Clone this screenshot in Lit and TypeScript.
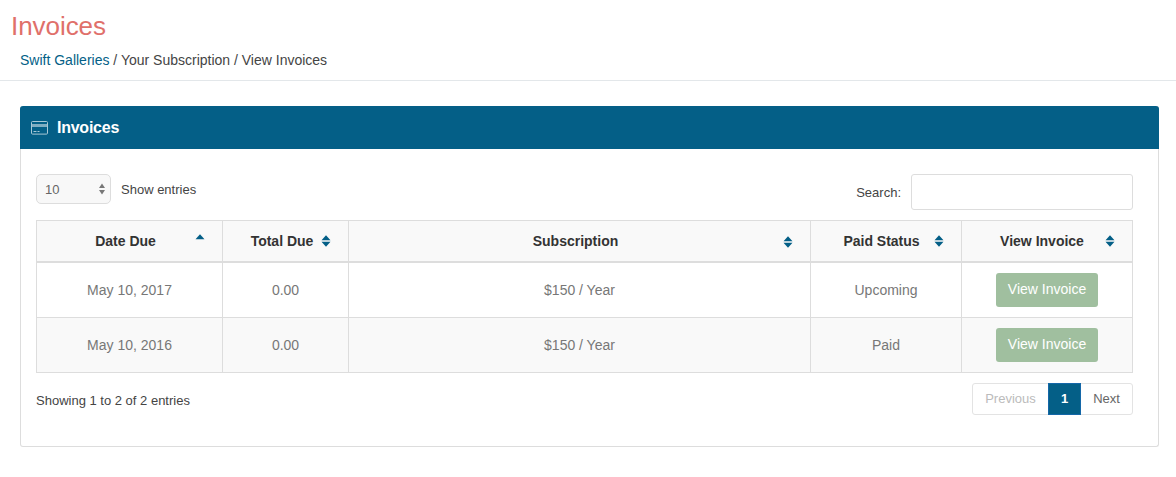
import { LitElement, html, css } from "lit";
import { customElement } from "lit/decorators.js";

const sortBoth = html`<svg class="sort" width="10" height="12" viewBox="0 0 10 12"><path d="M5 0.2 9.5 5.2H.5zM5 11.8.5 6.8h9z" fill="#045f87"/></svg>`;
const sortUp = html`<svg class="sort up" width="10" height="12" viewBox="0 0 10 12"><path d="M5 0.2 9.5 5.2H.5z" fill="#045f87"/></svg>`;

const rows = [
  ["May 10, 2017", "0.00", "$150 / Year", "Upcoming"],
  ["May 10, 2016", "0.00", "$150 / Year", "Paid"],
];

@customElement("app-root")
export class AppRoot extends LitElement {
  static styles = css`
    :host { display: block; font-family: "Liberation Sans", Arial, sans-serif; color: #333; background: #fff; min-height: 477px; box-sizing: border-box; }
    * { box-sizing: border-box; }
    .head { height: 81px; border-bottom: 1px solid #e3e7ea; padding: 11px 0 0 11px; }
    h1 { margin: 0; font-size: 26px; line-height: 30px; font-weight: 400; color: #e0706a; letter-spacing: -0.05px; }
    .crumb { margin: 10px 0 0 9px; font-size: 14px; line-height: 18px; color: #444; }
    .crumb a { color: #045f87; text-decoration: none; }
    .panel { margin: 25px 17px 0 20px; height: 341px; border: 1px solid #dddddd; border-top: 0; border-radius: 3px; display: flex; flex-direction: column; }
    .panel-head { margin: 0 -1px; height: 43px; background: #045f87; border-radius: 3px 3px 0 0; display: flex; align-items: center; padding-left: 11px; gap: 8px; color: #fff; font-size: 16px; font-weight: 700; letter-spacing: -0.25px; }
    .panel-head svg { display: block; }
    .body { padding: 25px 25px 0 15px; }
    .tools { height: 36px; display: flex; justify-content: space-between; align-items: flex-start; font-size: 13px; color: #444; }
    .len { display: flex; align-items: center; gap: 10px; height: 30px; }
    .select { width: 75px; height: 30px; border: 1px solid #ddd; border-radius: 5px; background: #f8f8f8; color: #666; font-size: 13px; display: flex; align-items: center; justify-content: space-between; padding: 0 3px 0 8px; }
    .search { display: flex; align-items: center; gap: 10px; }
    .input { width: 222px; height: 36px; border: 1px solid #ddd; border-radius: 3px; background: #fff; }
    .wrap { margin-top: 10px; }
    table { width: 1096px; table-layout: fixed; border-collapse: collapse; font-size: 14px; }
    .c1 { width: 186px; } .c2 { width: 126px; } .c3 { width: 462px; } .c4 { width: 151px; } .c5 { width: 171px; }
    th, td { border: 1px solid #dddddd; text-align: center; padding: 0; }
    th { height: 41.5px; background: #f9f9f9; border-bottom-width: 2px; color: #333; font-weight: 700; position: relative; }
    .th { display: flex; align-items: center; justify-content: center; height: 100%; }
    .t1 { padding-right: 8px; } .t2 { padding-left: 11px; gap: 8px; }
    .t3 { padding-right: 8px; } .t4 { padding-left: 15px; gap: 14px; } .t5 { padding-left: 21px; gap: 21px; }
    .sort { display: block; flex: none; }
    .abs { position: absolute; top: 15px; }
    .up { top: 13px; }
    .r17 { right: 17px; }
    td { height: 55px; color: #777; }
    tr.odd td { background: #fff; }
    tr.even td { background: #f9f9f9; }
    .btn { display: inline-block; width: 102px; height: 34px; line-height: 32px; background: #a0bf9f; border-radius: 3px; color: #fff; font-size: 14px; vertical-align: middle; }
    .foot { margin-top: 10px; display: flex; justify-content: space-between; align-items: flex-start; font-size: 13px; color: #444; }
    .info { padding-top: 10px; line-height: 16px; }
    .pager { display: flex; height: 32px; border: 1px solid #e3e3e3; border-radius: 3px; font-size: 13px; align-items: stretch; }
    .pager span { display: flex; align-items: center; justify-content: center; }
    .prev { width: 75px; color: #bbb; }
    .cur { width: 33px; margin: -1px 0; background: #045f87; color: #fff; font-weight: 700; border: 1px solid #1467a8; }
    .next { width: 51px; color: #666; }
  `;

  render() {
    return html`
      <div class="head">
        <h1>Invoices</h1>
        <div class="crumb"><a>Swift Galleries</a> / Your Subscription / View Invoices</div>
      </div>
      <section class="panel">
        <div class="panel-head">
          <svg width="18" height="14" viewBox="0 0 18 14">
            <rect x=".5" y=".5" width="16" height="12.6" rx="1" fill="none" stroke="#a9c8d6" stroke-width="1"/>
            <rect x="1" y="3" width="15" height="3" fill="#7fadc1"/>
            <path d="M2.5 10.5h3M6.5 10.5h2" stroke="#a9c8d6" stroke-width="1"/>
          </svg>
          <span>Invoices</span>
        </div>
        <div class="body">
          <div class="tools">
            <div class="len">
              <div class="select"><span>10</span>
                <svg width="10" height="14" viewBox="0 0 10 14"><path d="M5 1.5 8 6H2zM5 12.5 2 8h6z" fill="#777"/></svg>
              </div>
              <span>Show entries</span>
            </div>
            <div class="search"><span>Search:</span><div class="input"></div></div>
          </div>
          <div class="wrap">
            <table>
              <colgroup><col class="c1"/><col class="c2"/><col class="c3"/><col class="c4"/><col class="c5"/></colgroup>
              <thead><tr>
                <th><div class="th t1">Date Due</div><span class="abs up r17">${sortUp}</span></th>
                <th><div class="th t2">Total Due ${sortBoth}</div></th>
                <th><div class="th t3">Subscription</div><span class="abs r17">${sortBoth}</span></th>
                <th><div class="th t4">Paid Status ${sortBoth}</div></th>
                <th><div class="th t5">View Invoice ${sortBoth}</div></th>
              </tr></thead>
              <tbody>
                ${rows.map((r, i) => html`<tr class=${i % 2 ? "even" : "odd"}>
                  ${r.map((c) => html`<td>${c}</td>`)}
                  <td><span class="btn">View Invoice</span></td>
                </tr>`)}
              </tbody>
            </table>
          </div>
          <div class="foot">
            <div class="info">Showing 1 to 2 of 2 entries</div>
            <div class="pager"><span class="prev">Previous</span><span class="cur">1</span><span class="next">Next</span></div>
          </div>
        </div>
      </section>
    `;
  }
}
